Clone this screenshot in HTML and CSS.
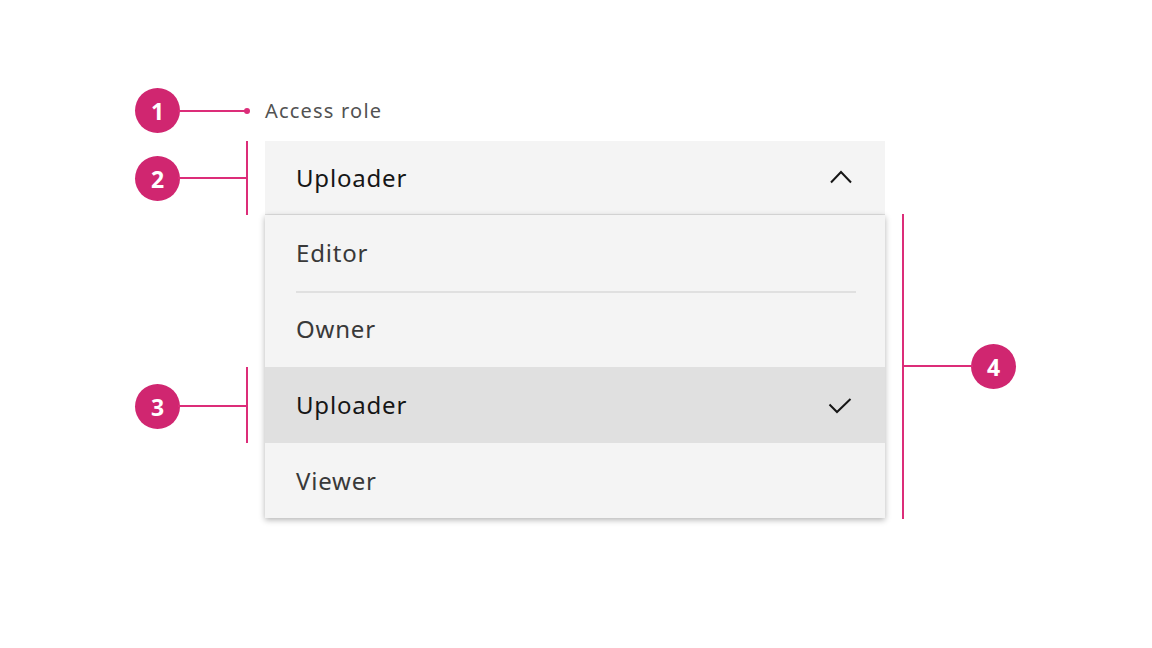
FILE: index.html
```html
<!DOCTYPE html>
<html lang="en">
<head>
    <meta charset="UTF-8">
    <meta name="viewport" content="width=device-width, initial-scale=1.0">
    <title>Dropdown anatomy</title>
    <link rel="stylesheet" href="styles.css">
</head>
<body>

    <main class="canvas">
        <!-- Själva dropdownen -->
        <div class="dropdown">
            <div class="dropdown-label">Access role</div>
            <div class="dropdown-field">
                <span>Uploader</span>
                <svg class="chevron" width="22" height="14" viewBox="0 0 22 14">
                    <polyline points="1,12.5 11,2 21,12.5" fill="none" stroke="#161616" stroke-width="2"/>
                </svg>
            </div>
            <ul class="dropdown-menu">
                <li class="menu-item"><div class="option">Editor</div></li>
                <li class="menu-item"><div class="option option-divided">Owner</div></li>
                <li class="menu-item selected">
                    <div class="option">
                        <span>Uploader</span>
                        <svg class="check" width="24" height="16" viewBox="0 0 24 16">
                            <polyline points="1.5,6.5 9,14 22.5,1" fill="none" stroke="#161616" stroke-width="2"/>
                        </svg>
                    </div>
                </li>
                <li class="menu-item"><div class="option">Viewer</div></li>
            </ul>
        </div>

        <!-- Markeringar -->
        <div class="badge badge-1">1</div>
        <div class="leader leader-1"></div>
        <div class="leader-dot"></div>

        <div class="badge badge-2">2</div>
        <div class="leader leader-2"></div>
        <div class="bracket bracket-2"></div>

        <div class="badge badge-3">3</div>
        <div class="leader leader-3"></div>
        <div class="bracket bracket-3"></div>

        <div class="badge badge-4">4</div>
        <div class="leader leader-4"></div>
        <div class="bracket bracket-4"></div>
    </main>

</body>
</html>
```

FILE: styles.css
```css
body {
    font-family: "Noto Sans", "Liberation Sans", sans-serif;
    margin: 0;
    padding: 0;
    background-color: #ffffff;
    color: #161616;
}

.canvas {
    position: relative;
    width: 1152px;
    height: 648px;
    overflow: hidden;
}

.dropdown {
    width: 620px;
    padding-top: 97px;
    margin-left: 265px;
}

.dropdown-label {
    font-size: 20px;
    line-height: 28px;
    color: #525252;
    margin-bottom: 16px;
    letter-spacing: 1.2px;
}

.dropdown-field {
    display: flex;
    align-items: center;
    justify-content: space-between;
    height: 73px;
    padding: 0 33px 0 31px;
    background-color: #f4f4f4;
    border-bottom: 1px solid #e0e0e0;
    font-size: 24px;
    letter-spacing: 0.8px;
    color: #161616;
}

.chevron {
    margin-top: -2px;
}

.dropdown-menu {
    list-style: none;
    margin: 0;
    padding: 0;
    background-color: #f4f4f4;
    box-shadow: 0 2px 6px rgba(0, 0, 0, 0.3);
}

.menu-item {
    height: 76px;
    padding: 0 29px 0 31px;
    font-size: 24px;
    letter-spacing: 0.8px;
    color: #393939;
}

.menu-item:last-child {
    height: 75px;
}

.menu-item.selected {
    background-color: #e0e0e0;
    color: #161616;
}

.option {
    display: flex;
    align-items: center;
    justify-content: space-between;
    height: 100%;
    box-sizing: border-box;
    border-top: 2px solid transparent;
    padding-bottom: 3px;
}

.option-divided {
    border-top-color: #e0e0e0;
}

.check {
    margin-right: 4px;
    margin-top: 2px;
}

.badge {
    position: absolute;
    width: 45px;
    height: 45px;
    border-radius: 50%;
    background-color: #d02670;
    color: white;
    font-size: 23px;
    font-weight: 700;
    display: flex;
    align-items: center;
    justify-content: center;
}

.badge-1 { left: 135px; top: 88px; }
.badge-2 { left: 135px; top: 156px; }
.badge-3 { left: 135px; top: 384px; }
.badge-4 { left: 971px; top: 344px; }

.leader {
    position: absolute;
    height: 2px;
    background-color: #dc2d79;
}

.leader-1 { left: 178px; top: 110px; width: 68px; }
.leader-2 { left: 178px; top: 177px; width: 70px; }
.leader-3 { left: 178px; top: 405px; width: 70px; }
.leader-4 { left: 903px; top: 365px; width: 70px; }

.leader-dot {
    position: absolute;
    left: 244px;
    top: 108px;
    width: 6px;
    height: 6px;
    border-radius: 50%;
    background-color: #dc2d79;
}

.bracket {
    position: absolute;
    width: 2px;
    background-color: #dc2d79;
}

.bracket-2 { left: 246px; top: 141px; height: 74px; }
.bracket-3 { left: 246px; top: 367px; height: 76px; }
.bracket-4 { left: 902px; top: 214px; height: 305px; }
```
